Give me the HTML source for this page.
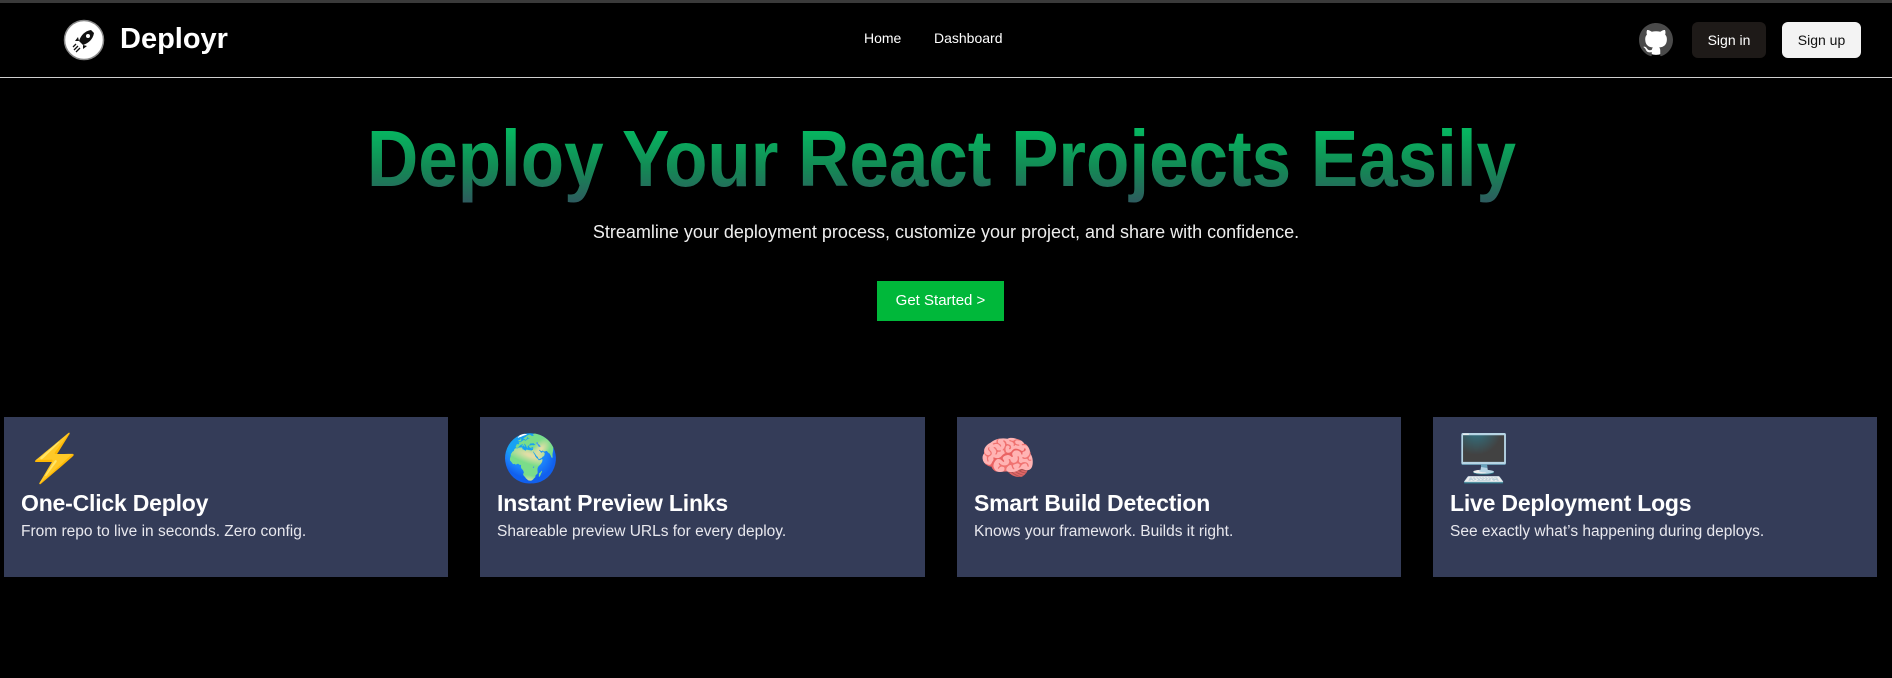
<!DOCTYPE html>
<html><head><meta charset="utf-8"><style>
*{margin:0;padding:0;box-sizing:border-box}
body{width:1892px;height:678px;background:#000;overflow:hidden;position:relative;font-family:"Liberation Sans","DejaVu Sans",sans-serif;color:#fff}
.a{position:absolute}
.card{position:absolute;top:417px;height:160px;background:#343c58}
.card .e{position:absolute;left:22px;top:12px;font-size:46px;line-height:60px;font-family:"Noto Color Emoji","DejaVu Sans",sans-serif}
.card h3{position:absolute;left:17px;top:73px;font-size:23px;font-weight:bold;letter-spacing:-0.2px}
.card p{position:absolute;left:17px;top:106px;font-size:15.5px;color:#e8e8ee}
</style></head><body>
<div class="a" style="left:0;top:0;width:1892px;height:3px;background:#3a3a3a"></div>
<div class="a" style="left:0;top:77px;width:1892px;height:1px;background:#cfcfcf"></div>
<svg class="a" style="left:63px;top:19px" width="42" height="42" viewBox="0 0 42 42">
<circle cx="21" cy="21" r="19.5" fill="#fff" stroke="#888" stroke-width="1.5"/>
<path d="M28 11 C22 12 18 16 16 22 L20 26 C26 24 30 20 31 14 Z" fill="#111"/>
<circle cx="25" cy="17" r="2" fill="#fff"/>
<path d="M16 22 L12 22 L15 18 Z M20 26 L20 30 L24 27 Z" fill="#111"/>
<path d="M15 27 L11 31 M17 29 L13 33 M13 25 L10 28" stroke="#111" stroke-width="1.3"/>
</svg>
<div class="a" style="left:120px;top:20px;font-size:29px;font-weight:bold;line-height:38px">Deployr</div>
<div class="a" style="left:864px;top:30px;font-size:14px">Home</div>
<div class="a" style="left:934px;top:30px;font-size:14px">Dashboard</div>
<svg class="a" style="left:1639px;top:23px" width="34" height="34" viewBox="0 0 16 16">
<circle cx="8" cy="8" r="7" fill="#fff"/>
<path fill="#4a4a4a" d="M8 0C3.58 0 0 3.58 0 8c0 3.54 2.29 6.53 5.470 7.59.4.07.55-.17.55-.38 0-.19-.01-.82-.01-1.49-2.01.37-2.53-.49-2.69-.94-.09-.23-.48-.94-.82-1.13-.28-.15-.68-.52-.01-.53.63-.01 1.08.58 1.23.82.72 1.21 1.87.87 2.33.66.07-.52.28-.87.51-1.07-1.780-.2-3.64-.89-3.64-3.95 0-.87.31-1.59.82-2.15-.08-.2-.36-1.02.08-2.12 0 0 .67-.21 2.2.82.64-.18 1.32-.27 2-.27.68 0 1.36.09 2 .27 1.53-1.04 2.2-.82 2.2-.82.44 1.1.16 1.92.08 2.12.51.56.82 1.27.82 2.15 0 3.07-1.87 3.75-3.65 3.95.29.25.54.73.54 1.48 0 1.07-.01 1.93-.01 2.2 0 .21.15.46.55.38A8.013 8.013 0 0016 8c0-4.42-3.58-8-8-8z"/>
</svg>
<div class="a" style="left:1692px;top:22px;width:74px;height:36px;background:#1e1a18;border-radius:6px;font-size:14px;text-align:center;line-height:36px">Sign in</div>
<div class="a" style="left:1782px;top:22px;width:79px;height:36px;background:#f3f3f3;color:#111;border-radius:6px;font-size:14px;text-align:center;line-height:36px">Sign up</div>
<svg class="a" style="left:0;top:100px" width="1892" height="110">
<defs><linearGradient id="g" x1="0" y1="0" x2="0" y2="1"><stop offset="0" stop-color="#00c965"/><stop offset="0.6" stop-color="#138a55"/><stop offset="1" stop-color="#2e5a5e"/></linearGradient></defs>
<text x="367" y="86" font-family="Liberation Sans, sans-serif" font-weight="bold" font-size="80" fill="url(#g)" textLength="1149" lengthAdjust="spacingAndGlyphs">Deploy Your React Projects Easily</text>
</svg>
<div class="a" style="left:0;width:1892px;top:222px;text-align:center;font-size:18px;color:#eee">Streamline your deployment process, customize your project, and share with confidence.</div>
<div class="a" style="left:877px;top:281px;width:127px;height:40px;background:#00b83a;font-size:15px;text-align:center;line-height:40px">Get Started &gt;</div>
<div class="card" style="left:4px;width:444px"><div class="e" style="color:#fc0">⚡</div><h3>One-Click Deploy</h3><p>From repo to live in seconds. Zero config.</p></div>
<div class="card" style="left:480px;width:445px"><div class="e">🌍</div><h3>Instant Preview Links</h3><p>Shareable preview URLs for every deploy.</p></div>
<div class="card" style="left:957px;width:444px"><div class="e">🧠</div><h3>Smart Build Detection</h3><p>Knows your framework. Builds it right.</p></div>
<div class="card" style="left:1433px;width:444px"><div class="e">🖥️</div><h3>Live Deployment Logs</h3><p>See exactly what’s happening during deploys.</p></div>
</body></html>
